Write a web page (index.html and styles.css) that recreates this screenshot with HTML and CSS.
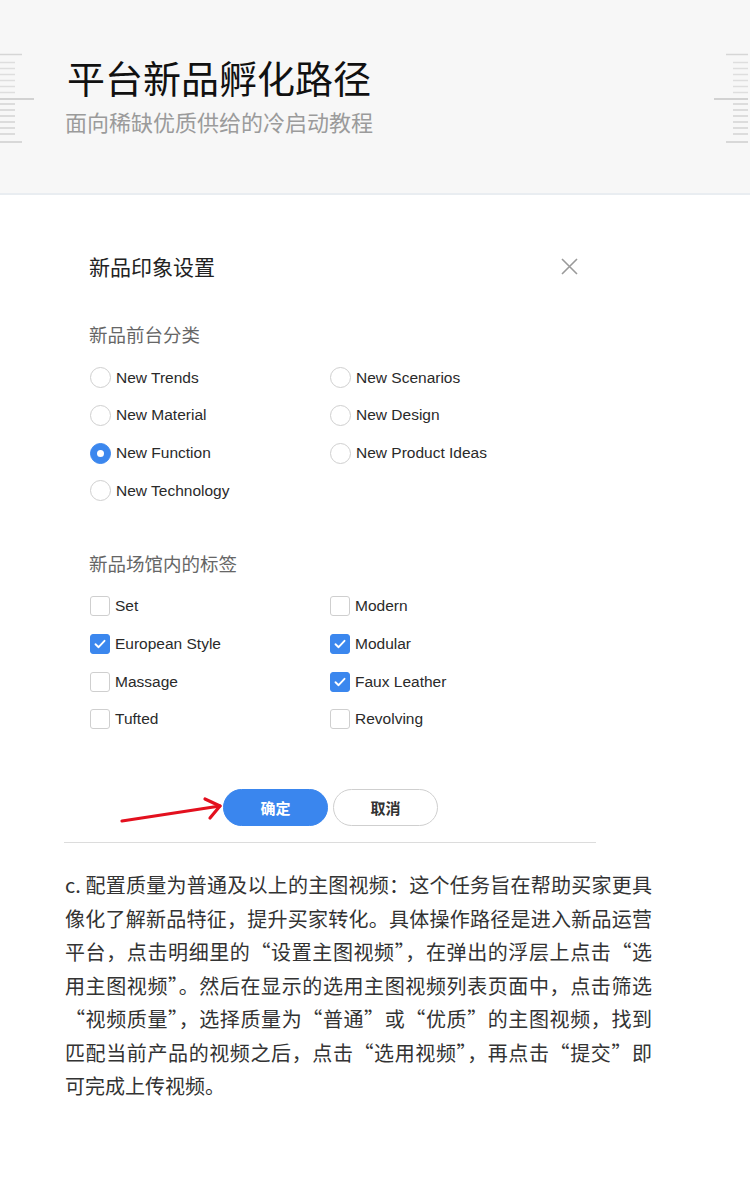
FILE: index.html
```html
<!DOCTYPE html>
<html lang="zh-CN">
<head>
    <meta charset="UTF-8">
    <meta name="viewport" content="width=device-width, initial-scale=1.0">
    <title>平台新品孵化路径</title>
    <link rel="stylesheet" href="styles.css">
</head>
<body>
    <header class="banner">
        <svg class="deco deco-left" width="36" height="94" viewBox="0 0 36 94">
            <line x1="0" y1="2.5" x2="22" y2="2.5" stroke="#d6d6d6" stroke-width="1.5"/>
            <g stroke="#dedede" stroke-width="1.5">
                <line x1="0" y1="10.5" x2="15" y2="10.5"/>
                <line x1="0" y1="16.5" x2="15" y2="16.5"/>
                <line x1="0" y1="22.5" x2="15" y2="22.5"/>
                <line x1="0" y1="28.5" x2="15" y2="28.5"/>
                <line x1="0" y1="34.5" x2="15" y2="34.5"/>
                <line x1="0" y1="40.5" x2="15" y2="40.5"/>
            </g>
            <line x1="0" y1="47" x2="34" y2="47" stroke="#c6c6c6" stroke-width="1.6"/>
            <g stroke="#cacaca" stroke-width="1.2">
                <line x1="0" y1="52" x2="15" y2="52"/>
                <line x1="0" y1="58" x2="15" y2="58"/>
                <line x1="0" y1="64" x2="15" y2="64"/>
                <line x1="0" y1="70" x2="15" y2="70"/>
                <line x1="0" y1="76" x2="15" y2="76"/>
                <line x1="0" y1="82" x2="15" y2="82"/>
            </g>
            <line x1="0" y1="90" x2="22" y2="90" stroke="#c8c8c8" stroke-width="1.3"/>
        </svg>
        <svg class="deco deco-right" width="36" height="94" viewBox="0 0 36 94">
            <line x1="0" y1="2.5" x2="22" y2="2.5" stroke="#d6d6d6" stroke-width="1.5"/>
            <g stroke="#dedede" stroke-width="1.5">
                <line x1="0" y1="10.5" x2="15" y2="10.5"/>
                <line x1="0" y1="16.5" x2="15" y2="16.5"/>
                <line x1="0" y1="22.5" x2="15" y2="22.5"/>
                <line x1="0" y1="28.5" x2="15" y2="28.5"/>
                <line x1="0" y1="34.5" x2="15" y2="34.5"/>
                <line x1="0" y1="40.5" x2="15" y2="40.5"/>
            </g>
            <line x1="0" y1="47" x2="34" y2="47" stroke="#c6c6c6" stroke-width="1.6"/>
            <g stroke="#cacaca" stroke-width="1.2">
                <line x1="0" y1="52" x2="15" y2="52"/>
                <line x1="0" y1="58" x2="15" y2="58"/>
                <line x1="0" y1="64" x2="15" y2="64"/>
                <line x1="0" y1="70" x2="15" y2="70"/>
                <line x1="0" y1="76" x2="15" y2="76"/>
                <line x1="0" y1="82" x2="15" y2="82"/>
            </g>
            <line x1="0" y1="90" x2="22" y2="90" stroke="#c8c8c8" stroke-width="1.3"/>
        </svg>
        <h1>平台新品孵化路径</h1>
        <p class="sub">面向稀缺优质供给的冷启动教程</p>
    </header>

    <main class="content">
        <section class="dialog">
            <div class="dialog-head">
                <h2>新品印象设置</h2>
                <svg class="close" width="17" height="17" viewBox="0 0 17 17">
                    <path d="M1 1 L16 16 M16 1 L1 16" stroke="#9a9a9a" stroke-width="1.6" fill="none"/>
                </svg>
            </div>

            <h3 class="group-title">新品前台分类</h3>
            <div class="options">
                <label class="opt"><span class="radio"></span>New Trends</label>
                <label class="opt"><span class="radio"></span>New Scenarios</label>
                <label class="opt"><span class="radio"></span>New Material</label>
                <label class="opt"><span class="radio"></span>New Design</label>
                <label class="opt"><span class="radio on"></span>New Function</label>
                <label class="opt"><span class="radio"></span>New Product Ideas</label>
                <label class="opt"><span class="radio"></span>New Technology</label>
            </div>

            <h3 class="group-title">新品场馆内的标签</h3>
            <div class="options">
                <label class="opt"><span class="check"></span>Set</label>
                <label class="opt"><span class="check"></span>Modern</label>
                <label class="opt"><span class="check on"><svg width="14" height="14" viewBox="0 0 14 14"><path d="M2.5 7.2 L5.6 10.2 L11.5 3.8" stroke="#fff" stroke-width="1.9" fill="none" stroke-linecap="round" stroke-linejoin="round"/></svg></span>European Style</label>
                <label class="opt"><span class="check on"><svg width="14" height="14" viewBox="0 0 14 14"><path d="M2.5 7.2 L5.6 10.2 L11.5 3.8" stroke="#fff" stroke-width="1.9" fill="none" stroke-linecap="round" stroke-linejoin="round"/></svg></span>Modular</label>
                <label class="opt"><span class="check"></span>Massage</label>
                <label class="opt"><span class="check on"><svg width="14" height="14" viewBox="0 0 14 14"><path d="M2.5 7.2 L5.6 10.2 L11.5 3.8" stroke="#fff" stroke-width="1.9" fill="none" stroke-linecap="round" stroke-linejoin="round"/></svg></span>Faux Leather</label>
                <label class="opt"><span class="check"></span>Tufted</label>
                <label class="opt"><span class="check"></span>Revolving</label>
            </div>

            <div class="actions">
                <svg class="arrow" width="110" height="34" viewBox="0 0 110 34">
                    <g stroke="#e3101e" stroke-width="3.2" fill="none" stroke-linecap="round" stroke-linejoin="round">
                        <path d="M5 28 L103 13"/>
                        <path d="M88 6 L103 13 L93 25"/>
                    </g>
                </svg>
                <button class="btn btn-primary">确定</button>
                <button class="btn">取消</button>
            </div>
        </section>

        <div class="rule"></div>

        <p class="desc">
            <span class="ln">c. 配置质量为普通及以上的主图视频：这个任务旨在帮助买家更具</span>
            <span class="ln">像化了解新品特征，提升买家转化。具体操作路径是进入新品运营</span>
            <span class="ln">平台，点击明细里的“设置主图视频”，在弹出的浮层上点击“选</span>
            <span class="ln">用主图视频”。然后在显示的选用主图视频列表页面中，点击筛选</span>
            <span class="ln">“视频质量”，选择质量为“普通”或“优质”的主图视频，找到</span>
            <span class="ln">匹配当前产品的视频之后，点击“选用视频”，再点击“提交”即</span>
            <span class="ln last">可完成上传视频。</span>
        </p>
    </main>
</body>
</html>
```

FILE: styles.css
```css
body {
    margin: 0;
    padding: 0;
    background-color: #fff;
    font-family: "Noto Sans CJK SC", "Liberation Sans", sans-serif;
    color: #333;
}
.banner {
    position: relative;
    height: 195px;
    box-sizing: border-box;
    background-color: #f7f7f7;
    border-bottom: 2px solid #e9edf1;
    padding: 54px 0 0 65px;
}
.deco {
    position: absolute;
    top: 52px;
}
.deco-left {
    left: 0;
}
.deco-right {
    right: 2px;
    transform: scaleX(-1);
}
.banner h1 {
    margin: 0;
    padding-left: 2px;
    font-size: 38px;
    line-height: 46px;
    font-weight: 400;
    color: #111;
}
.sub {
    margin: 6px 0 0;
    font-size: 22px;
    line-height: 30px;
    color: #9b9b9b;
}
.content {
    padding-left: 64px;
}
.dialog {
    width: 532px;
    box-sizing: border-box;
    padding: 56px 18px 0 25px;
}
.dialog-head {
    display: flex;
    justify-content: space-between;
    align-items: center;
    height: 30px;
}
.dialog-head h2 {
    margin: 0;
    font-size: 21px;
    line-height: 30px;
    font-weight: 400;
    color: #222;
}
.group-title {
    margin: 39.25px 0 0;
    font-size: 18.5px;
    line-height: 28px;
    font-weight: 400;
    color: #666;
}
.options {
    display: grid;
    grid-template-columns: 240px 240px;
    grid-auto-rows: 37.7px;
    margin-top: 10.65px;
}
.opt {
    display: flex;
    align-items: center;
    gap: 5px;
    padding-left: 1px;
    font-family: "Liberation Sans", Arial, sans-serif;
    font-size: 15.5px;
    color: #2a2a2a;
}
.radio {
    width: 21px;
    height: 21px;
    box-sizing: border-box;
    border: 1px solid #cfcfcf;
    border-radius: 50%;
    background-color: #fff;
    display: flex;
    align-items: center;
    justify-content: center;
}
.radio.on {
    background-color: #3b87ee;
    border-color: #3b87ee;
}
.radio.on::after {
    content: "";
    width: 7px;
    height: 7px;
    border-radius: 50%;
    background-color: #fff;
}
.check {
    width: 20px;
    height: 20px;
    box-sizing: border-box;
    border: 1px solid #cfcfcf;
    border-radius: 3px;
    background-color: #fff;
    display: flex;
    align-items: center;
    justify-content: center;
}
.check.on {
    background-color: #3b87ee;
    border-color: #3b87ee;
}
.actions {
    position: relative;
    display: flex;
    gap: 5px;
    margin-top: 50.5px;
    padding-left: 134px;
}
.arrow {
    position: absolute;
    left: 28px;
    top: 4px;
}
.btn {
    width: 105px;
    height: 37px;
    box-sizing: border-box;
    border: 1px solid #cfcfcf;
    border-radius: 19px;
    background-color: #fff;
    font-family: "Noto Sans CJK SC", sans-serif;
    font-size: 15px;
    font-weight: 700;
    color: #333;
    padding: 0;
}
.btn-primary {
    background-color: #3a86ee;
    border-color: #3a86ee;
    color: #fff;
}
.rule {
    width: 532px;
    margin-top: 16.5px;
    border-top: 1px solid #dcdcdc;
}
.desc {
    width: 587px;
    margin: 25px 0 0 1px;
    font-size: 20px;
    line-height: 33.5px;
    color: #333;
}
.ln {
    display: block;
    text-align: justify;
    text-align-last: justify;
}
.ln.last {
    text-align-last: left;
}
```
